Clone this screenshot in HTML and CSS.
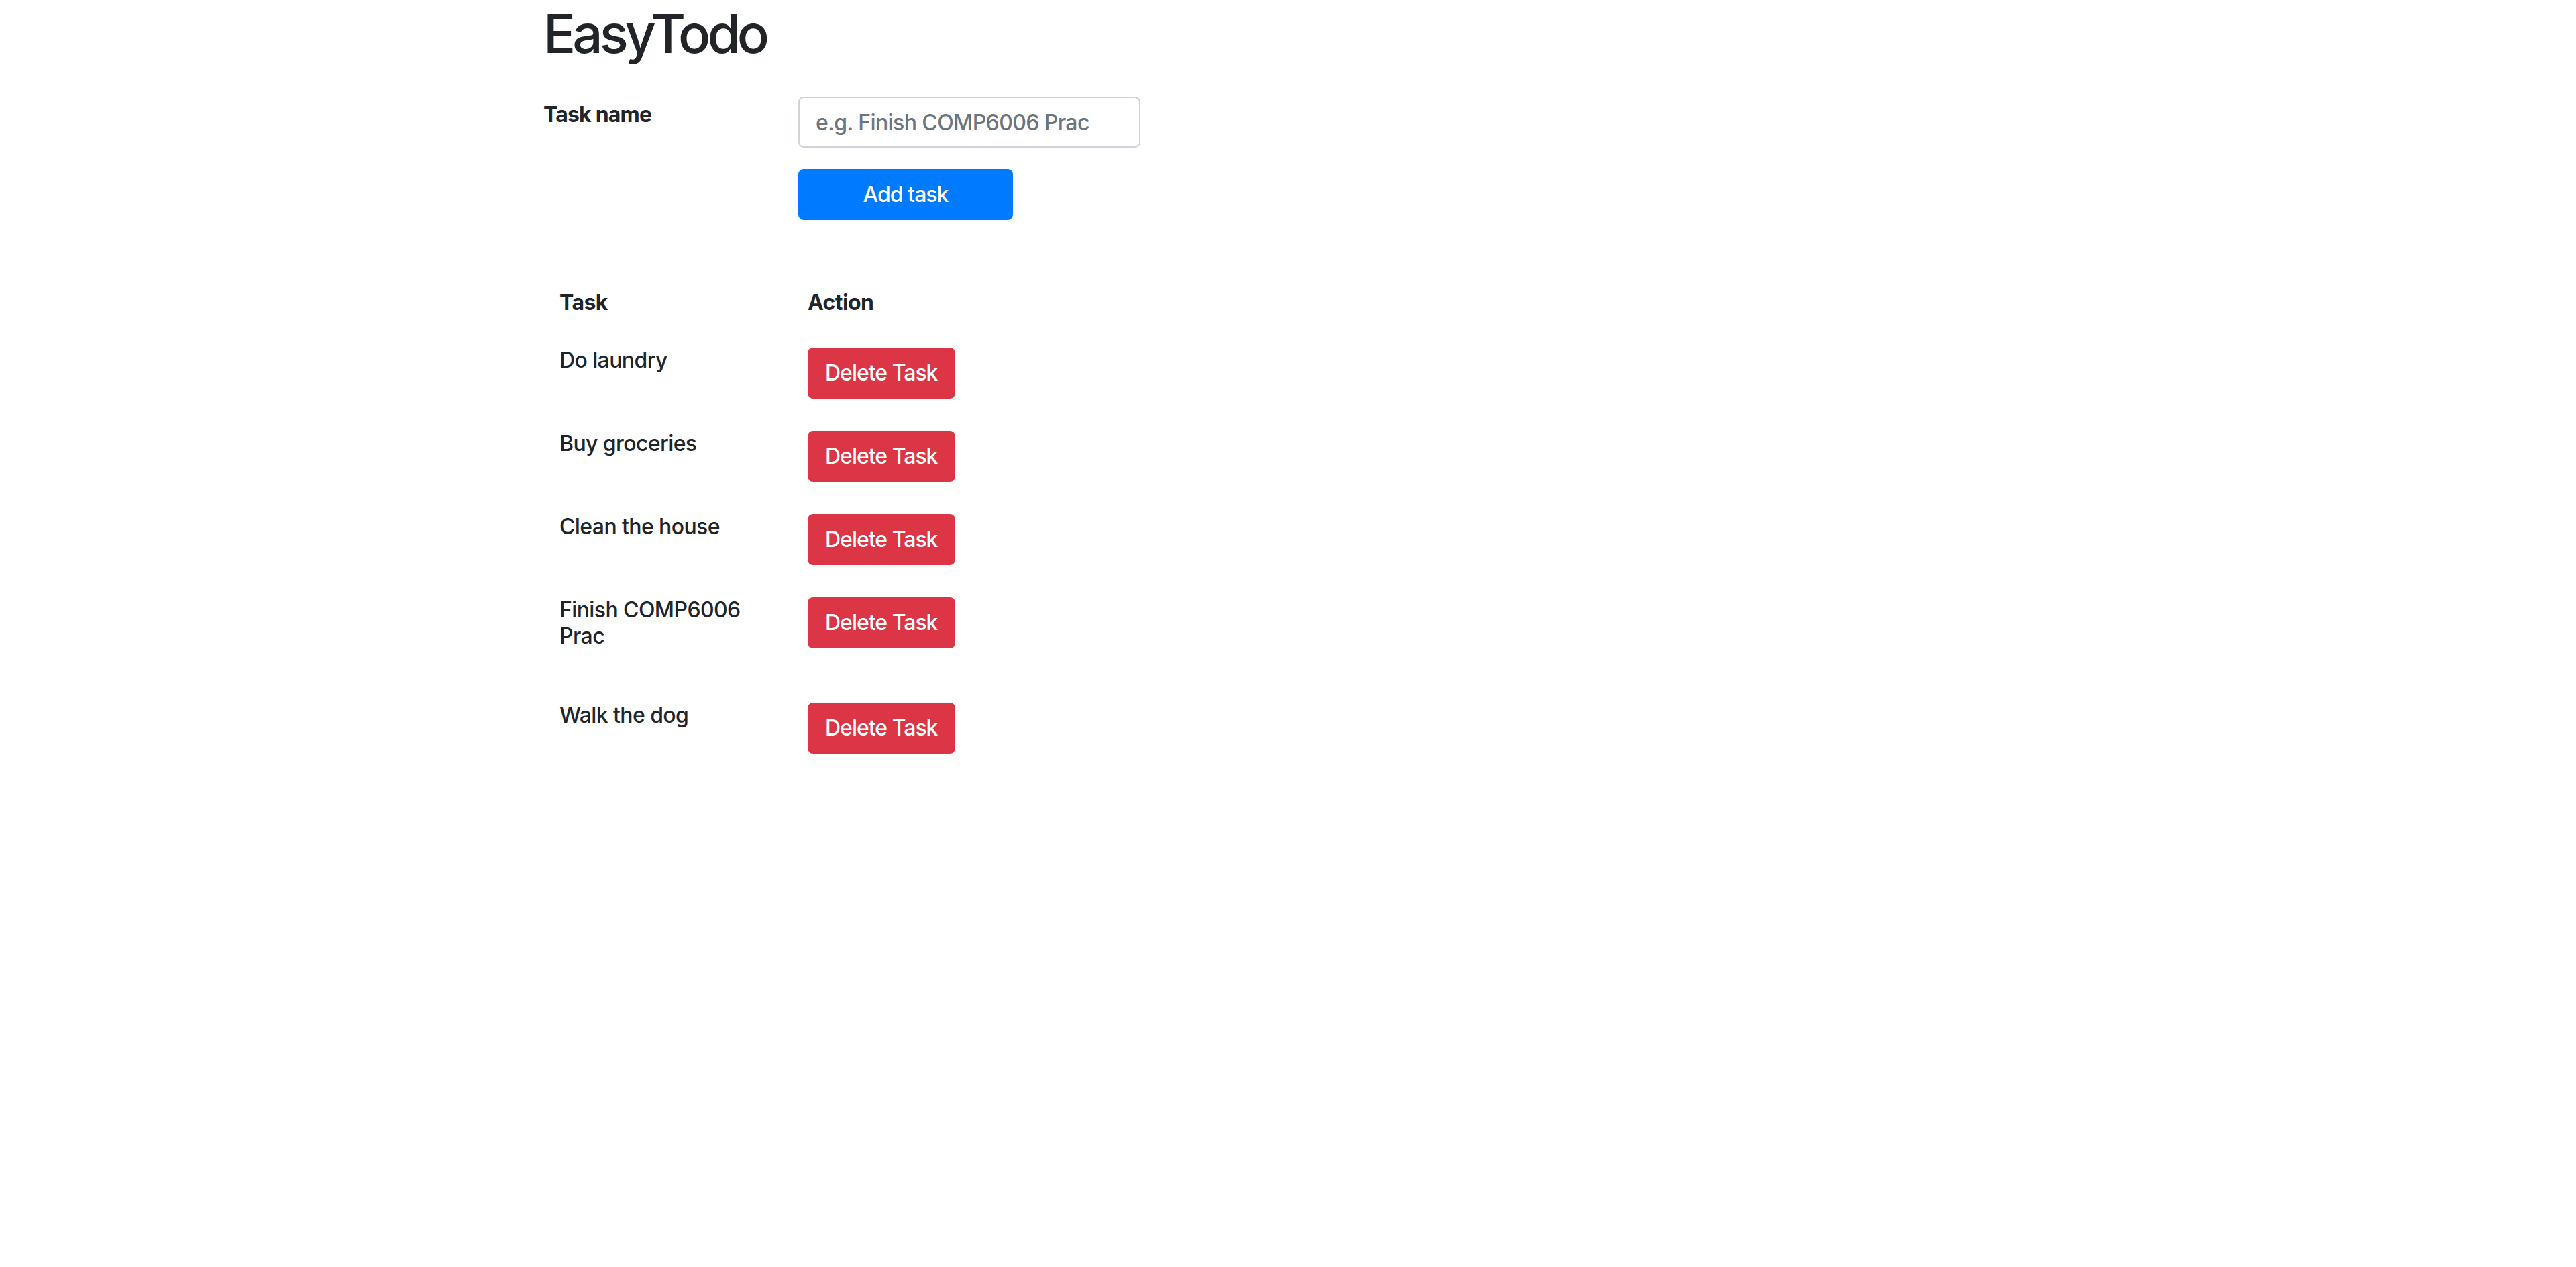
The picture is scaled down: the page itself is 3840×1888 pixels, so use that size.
FILE: index.html
```html
<!DOCTYPE html>
<html lang="en">
<head>
<meta charset="utf-8">
<title>EasyTodo</title>
<link rel="stylesheet" href="styles.css">
</head>
<body>
<div class="container">
  <h1 class="title">EasyTodo</h1>
  <form class="task-form">
    <div class="form-row">
      <div class="col-label"><label class="label" for="task">Task name</label></div>
      <div class="col-input"><input class="input" id="task" type="text" placeholder="e.g. Finish COMP6006 Prac"></div>
    </div>
    <div class="form-row">
      <div class="col-offset"></div>
      <div class="col-btn"><button class="btn btn-primary" type="button">Add task</button></div>
    </div>
  </form>
  <table class="tasks">
    <colgroup><col class="c-task"><col class="c-action"></colgroup>
    <thead>
      <tr><th>Task</th><th>Action</th></tr>
    </thead>
    <tbody>
      <tr><td><p class="name">Do laundry</p></td><td><button class="btn btn-danger" type="button">Delete Task</button></td></tr>
      <tr><td><p class="name">Buy groceries</p></td><td><button class="btn btn-danger" type="button">Delete Task</button></td></tr>
      <tr><td><p class="name">Clean the house</p></td><td><button class="btn btn-danger" type="button">Delete Task</button></td></tr>
      <tr><td><p class="name">Finish COMP6006 Prac</p></td><td><button class="btn btn-danger" type="button">Delete Task</button></td></tr>
      <tr><td><p class="name">Walk the dog</p></td><td><button class="btn btn-danger" type="button">Delete Task</button></td></tr>
    </tbody>
  </table>
</div>
</body>
</html>
```
FILE: styles.css
```css
* { box-sizing: border-box; }
html, body { margin: 0; padding: 0; background: #fff; }
body {
  font-family: Inter, "Noto Sans", "Liberation Sans", sans-serif;
  font-size: 32px;
  font-weight: 450;
  line-height: 1.5;
  color: #212529;
  letter-spacing: -0.6px;
}
.container {
  width: 2280px;
  margin: 0 auto;
  padding: 0 30px;
}
.title {
  font-size: 80px;
  font-weight: 500;
  line-height: 1.2;
  margin: 2px 0 46px 0;
  letter-spacing: -5px;
}
.task-form { margin: 0 0 80px 0; }
.form-row {
  display: flex;
  margin: 0 -30px 32px -30px;
}
.col-label, .col-offset { width: 380px; padding: 0 30px; }
.col-input { width: 570px; padding: 0 30px; }
.col-btn { width: 380px; padding: 0 30px; }
.label {
  display: inline-block;
  font-weight: 700;
  padding-top: 3px;
  letter-spacing: -0.8px;
}
.input {
  display: block;
  width: 100%;
  height: 76px;
  padding: 12px 24px;
  font: inherit;
  font-size: 32px;
  line-height: 48px;
  color: #495057;
  background: #fff;
  border: 2px solid #ced4da;
  border-radius: 8px;
  outline: none;
  letter-spacing: -0.6px;
}
.input::placeholder { color: #6c757d; opacity: 1; }
.btn {
  display: inline-block;
  font: inherit;
  font-size: 32px;
  line-height: 48px;
  padding: 12px 24px;
  border: 2px solid transparent;
  border-radius: 8px;
  color: #fff;
  text-align: center;
  cursor: pointer;
  letter-spacing: -1px;
}
.btn-primary { background: #007bff; border-color: #007bff; width: 100%; }
.btn-danger { background: #dc3545; border-color: #dc3545; }
.tasks {
  border-collapse: collapse;
  table-layout: fixed;
  width: 700px;
  line-height: 1.2;
}
.c-task { width: 370px; }
.c-action { width: 330px; }
.tasks th, .tasks td {
  padding: 24px;
  text-align: left;
  vertical-align: top;
}
.tasks th { font-weight: 700; }
.name { margin: 0 0 32px 0; }
```
